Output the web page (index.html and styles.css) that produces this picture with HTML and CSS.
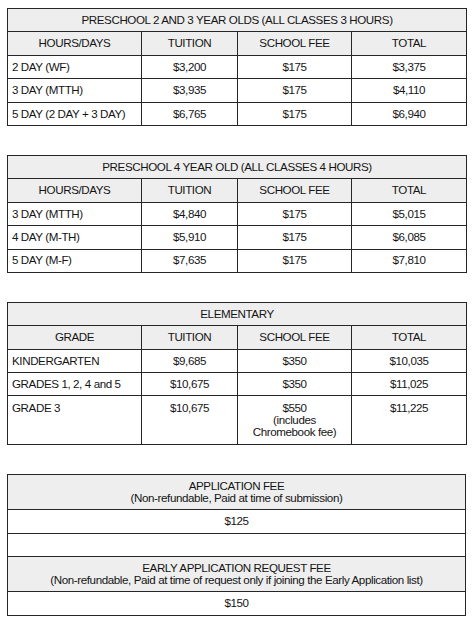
FILE: index.html
```html
<!DOCTYPE html>
<html>
<head>
<meta charset="utf-8">
<link rel="stylesheet" href="styles.css">
</head>
<body>
<div class="page">
  <table class="fees">
    <colgroup><col class="c1"><col class="c2"><col class="c3"><col class="c4"></colgroup>
    <tr class="title"><td colspan="4">PRESCHOOL 2 AND 3 YEAR OLDS (ALL CLASSES 3 HOURS)</td></tr>
    <tr class="head"><td>HOURS/DAYS</td><td>TUITION</td><td>SCHOOL FEE</td><td>TOTAL</td></tr>
    <tr><td class="label">2 DAY (WF)</td><td>$3,200</td><td>$175</td><td>$3,375</td></tr>
    <tr><td class="label">3 DAY (MTTH)</td><td>$3,935</td><td>$175</td><td>$4,110</td></tr>
    <tr><td class="label">5 DAY (2 DAY + 3 DAY)</td><td>$6,765</td><td>$175</td><td>$6,940</td></tr>
  </table>

  <table class="fees">
    <colgroup><col class="c1"><col class="c2"><col class="c3"><col class="c4"></colgroup>
    <tr class="title"><td colspan="4">PRESCHOOL 4 YEAR OLD (ALL CLASSES 4 HOURS)</td></tr>
    <tr class="head"><td>HOURS/DAYS</td><td>TUITION</td><td>SCHOOL FEE</td><td>TOTAL</td></tr>
    <tr><td class="label">3 DAY (MTTH)</td><td>$4,840</td><td>$175</td><td>$5,015</td></tr>
    <tr><td class="label">4 DAY (M-TH)</td><td>$5,910</td><td>$175</td><td>$6,085</td></tr>
    <tr><td class="label">5 DAY (M-F)</td><td>$7,635</td><td>$175</td><td>$7,810</td></tr>
  </table>

  <table class="fees">
    <colgroup><col class="c1"><col class="c2"><col class="c3"><col class="c4"></colgroup>
    <tr class="title"><td colspan="4">ELEMENTARY</td></tr>
    <tr class="head"><td>GRADE</td><td>TUITION</td><td>SCHOOL FEE</td><td>TOTAL</td></tr>
    <tr><td class="label">KINDERGARTEN</td><td>$9,685</td><td>$350</td><td>$10,035</td></tr>
    <tr><td class="label">GRADES 1, 2, 4 and 5</td><td>$10,675</td><td>$350</td><td>$11,025</td></tr>
    <tr class="tall"><td class="label">GRADE 3</td><td>$10,675</td><td>$550<br>(includes<br>Chromebook fee)</td><td>$11,225</td></tr>
  </table>

  <table class="fees single">
    <tr class="title two"><td>APPLICATION FEE<br>(Non-refundable, Paid at time of submission)</td></tr>
    <tr><td>$125</td></tr>
    <tr><td></td></tr>
    <tr class="title two"><td>EARLY APPLICATION REQUEST FEE<br>(Non-refundable, Paid at time of request only if joining the Early Application list)</td></tr>
    <tr><td>$150</td></tr>
  </table>
</div>
</body>
</html>
```

FILE: styles.css
```css
html, body {
  margin: 0;
  padding: 0;
  background: #ffffff;
}

.page {
  padding: 8px 0 0 7px;
  display: flex;
  flex-direction: column;
  gap: 29px;
}

.fees {
  border-collapse: collapse;
  table-layout: fixed;
  width: 459px;
  font-family: "Liberation Sans", Arial, sans-serif;
  font-size: 11.6px;
  letter-spacing: -0.4px;
  line-height: 12.5px;
  color: #141414;
}

.fees td {
  border: 1px solid #262626;
  height: 22.4px;
  padding: 0 4px;
  text-align: center;
  vertical-align: middle;
}

.fees .c1 { width: 134px; }
.fees .c2 { width: 96px; }
.fees .c3 { width: 114px; }
.fees .c4 { width: 115px; }

.fees .title td,
.fees .head td {
  background: #eeeeee;
}

.fees td.label {
  text-align: left;
}

.fees .tall td {
  height: 42px;
  line-height: 12px;
  vertical-align: top;
  padding-top: 6px;
}

.fees .two td {
  height: 34px;
}
```
